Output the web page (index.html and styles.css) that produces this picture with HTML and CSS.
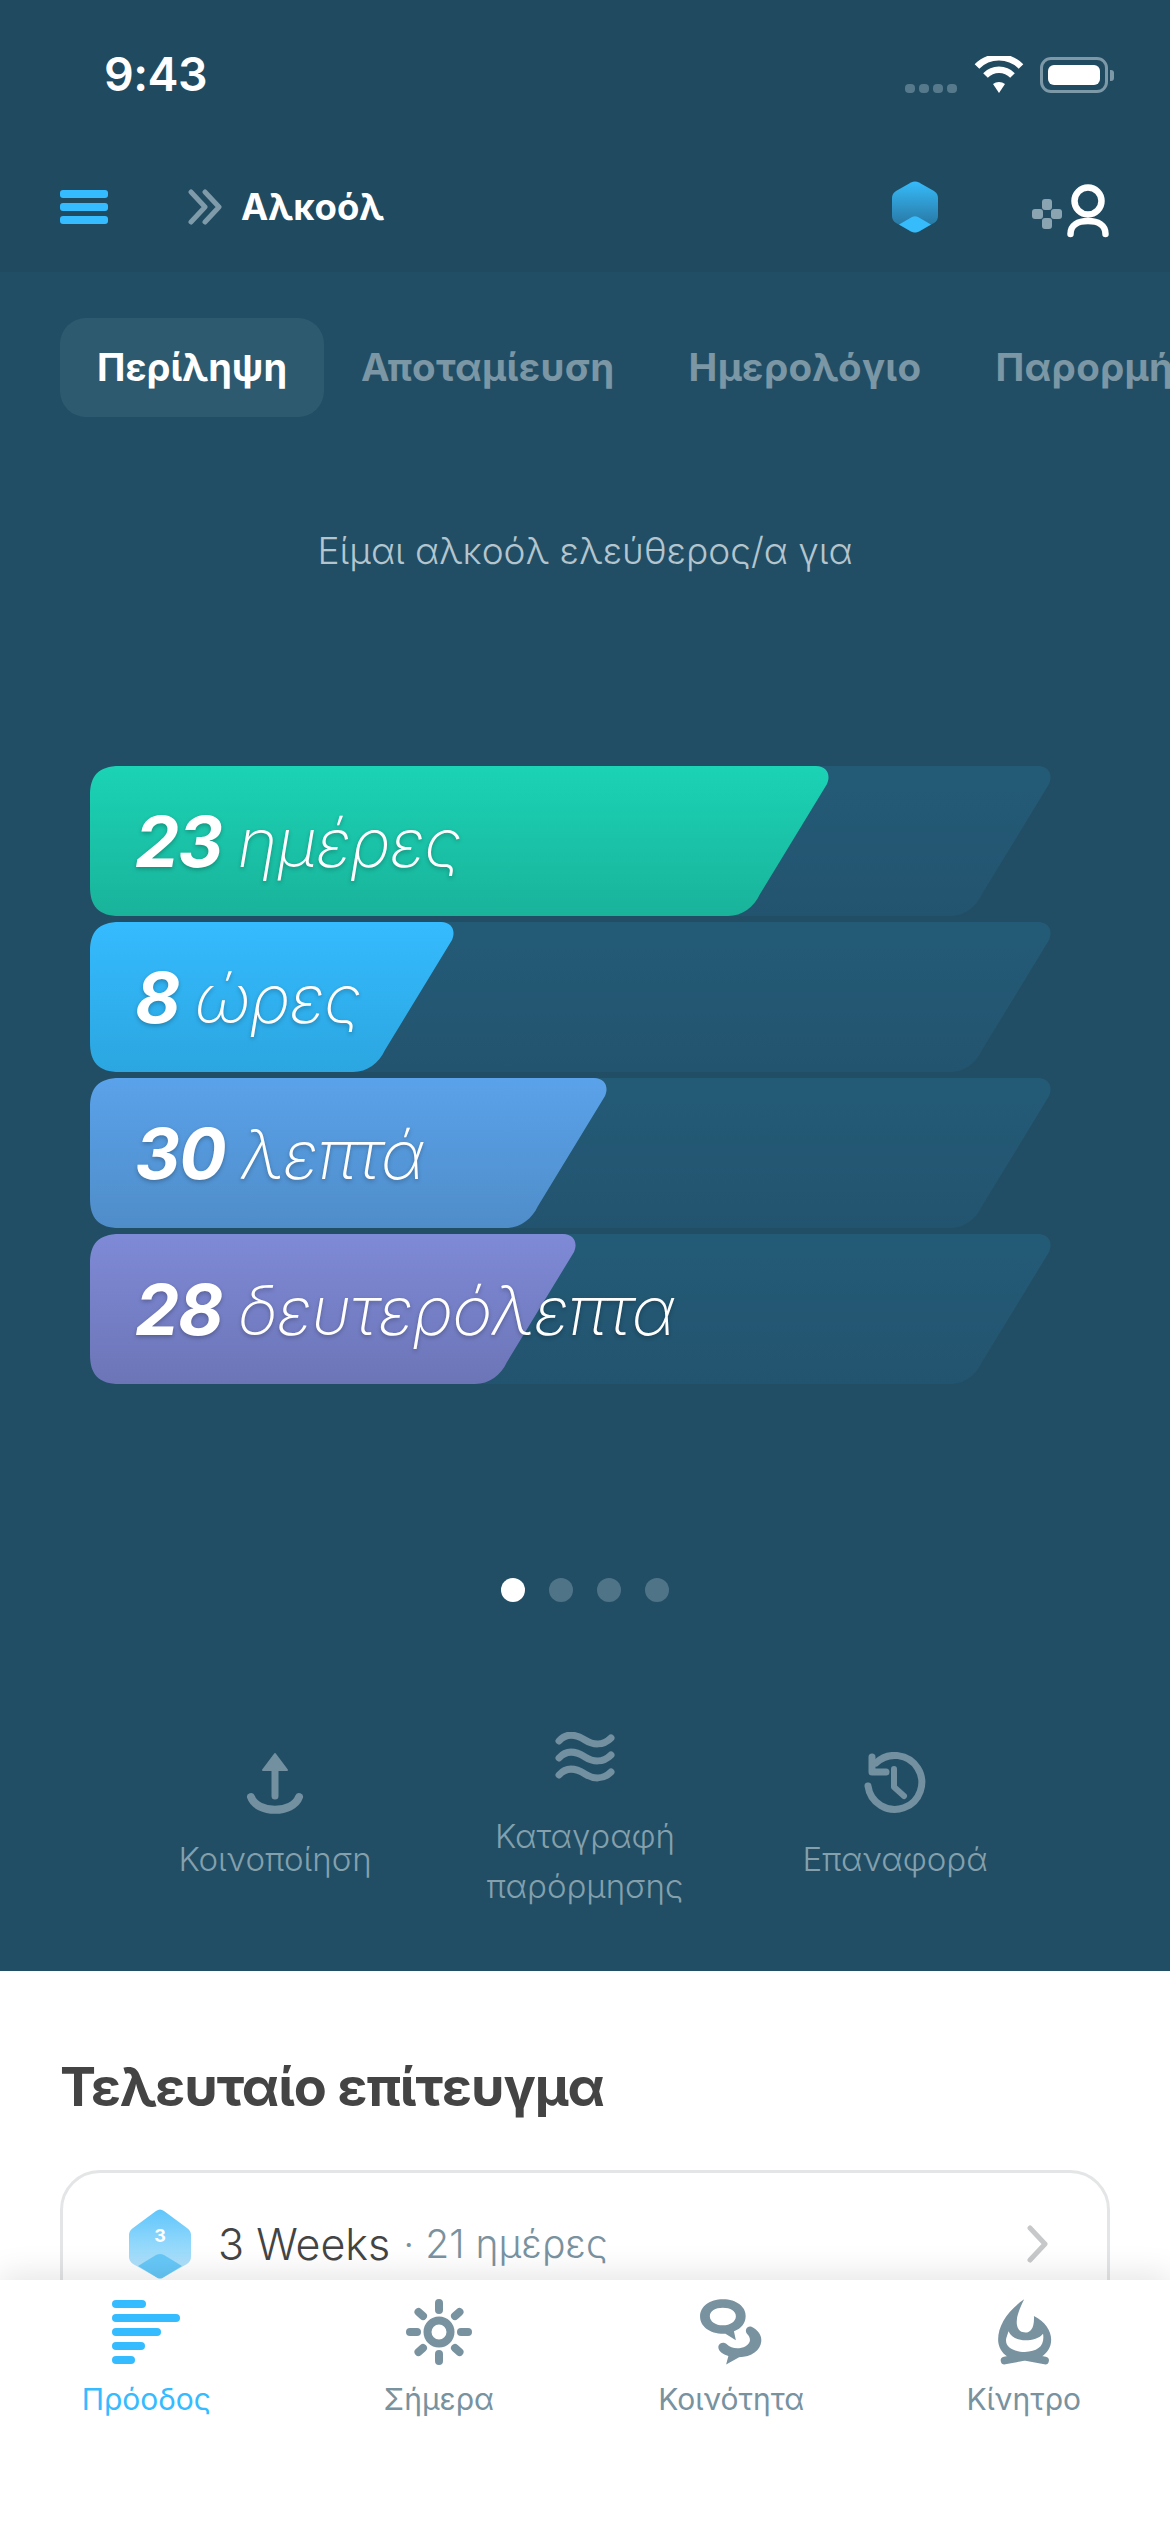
FILE: index.html
```html
<!DOCTYPE html>
<html lang="el">
<head>
    <meta charset="UTF-8">
    <meta name="viewport" content="width=device-width, initial-scale=1.0">
    <title>Αλκοόλ</title>
    <link rel="stylesheet" href="styles.css">
</head>
<body>
    <div class="app">
        <header class="top">
            <div class="status">
                <span class="time">9:43</span>
                <div class="status-icons">
                    <span class="signal"><i></i><i></i><i></i><i></i></span>
                    <svg class="wifi" width="50" height="37" viewBox="0 0 50 37">
                        <path d="M25 37 L19 28 A10 10 0 0 1 31 28 Z" fill="#fff"/>
                        <path d="M11.5 19.5 A19 19 0 0 1 38.5 19.5" fill="none" stroke="#fff" stroke-width="6.5"/>
                        <path d="M3 10.5 A31 31 0 0 1 47 10.5" fill="none" stroke="#fff" stroke-width="6.5"/>
                    </svg>
                    <span class="battery"><b></b></span>
                </div>
            </div>
            <nav class="navbar">
                <div class="burger"><i></i><i></i><i></i></div>
                <svg class="chevrons" width="34" height="36" viewBox="0 0 34 36">
                    <path d="M3 3 L17 18 L3 33 M17 3 L31 18 L17 33" fill="none" stroke="#7f9aa8" stroke-width="5" stroke-linecap="round" stroke-linejoin="round"/>
                </svg>
                <span class="nav-title">Αλκοόλ</span>
                <svg class="hex" width="46" height="52" viewBox="0 0 46 52">
                    <defs>
                        <linearGradient id="hexfill" x1="0" y1="0" x2="0" y2="1">
                            <stop offset="0" stop-color="#36bbfb"/>
                            <stop offset="1" stop-color="#266d94"/>
                        </linearGradient>
                    </defs>
                    <path d="M19 1.500 Q23 -0.500 27 1.500 L42 10 Q46 12.500 46 17 V35 Q46 39.500 42 42 L27 50.500 Q23 52.500 19 50.500 L4 42 Q0 39.500 0 35 V17 Q0 12.500 4 10 Z" fill="url(#hexfill)"/>
                    <path d="M7 43.500 L20 36 Q23 34.500 26 36 L39 43.500 L27 50.500 Q23 52.500 19 50.500 Z" fill="#36bbfb"/>
                </svg>
                <svg class="person" width="96" height="54" viewBox="0 0 96 54">
                    <g fill="#8aa4b1">
                        <rect x="23" y="15" width="10" height="11" rx="3"/>
                        <rect x="23" y="34" width="10" height="11" rx="3"/>
                        <rect x="13" y="25" width="11" height="10" rx="3"/>
                        <rect x="32" y="25" width="11" height="10" rx="3"/>
                    </g>
                    <circle cx="69" cy="17" r="13.500" fill="none" stroke="#fff" stroke-width="6.500"/>
                    <path d="M51.500 50 C51.500 41 59 37 69 37 C79 37 86.500 41 86.500 50" fill="none" stroke="#fff" stroke-width="6.500" stroke-linecap="round"/>
                </svg>
            </nav>
        </header>

        <section class="hero">
            <div class="tabs">
                <span class="tab active">Περίληψη</span>
                <span class="tab">Αποταμίευση</span>
                <span class="tab">Ημερολόγιο</span>
                <span class="tab">Παρορμήσεις</span>
            </div>

            <p class="lead">Είμαι αλκοόλ ελεύθερος/α για</p>

            <svg class="defs" width="0" height="0">
                <defs>
                    <linearGradient id="track" x1="0" y1="0" x2="0" y2="1"><stop offset="0" stop-color="#235b77"/><stop offset="1" stop-color="#23546f"/></linearGradient>
                    <linearGradient id="green" x1="0" y1="0" x2="0" y2="1"><stop offset="0" stop-color="#1bd3b5"/><stop offset="1" stop-color="#19b39a"/></linearGradient>
                    <linearGradient id="blue" x1="0" y1="0" x2="0" y2="1"><stop offset="0" stop-color="#35bbff"/><stop offset="1" stop-color="#2ba6e0"/></linearGradient>
                    <linearGradient id="sky" x1="0" y1="0" x2="0" y2="1"><stop offset="0" stop-color="#5aa2ea"/><stop offset="1" stop-color="#4f8dc9"/></linearGradient>
                    <linearGradient id="violet" x1="0" y1="0" x2="0" y2="1"><stop offset="0" stop-color="#7f8ad7"/><stop offset="1" stop-color="#6c75b6"/></linearGradient>
                </defs>
            </svg>

            <div class="bars">
                <div class="bar">
                    <svg viewBox="0 0 964 150" width="964" height="150">
                        <path fill="url(#track)" d="M30 0 H948 C959 0 963 9 959 18 L892 128 C886 141 874 150 860 150 H30 C8 150 0 140 0 120 V30 C0 10 8 0 30 0 Z"/>
                        <path fill="url(#green)" d="M30 0 H726 C737 0 741 9 737 18 L670 128 C664 141 652 150 638 150 H30 C8 150 0 140 0 120 V30 C0 10 8 0 30 0 Z"/>
                    </svg>
                    <span class="bar-text"><b>23</b> ημέρες</span>
                </div>
                <div class="bar">
                    <svg viewBox="0 0 964 150" width="964" height="150">
                        <path fill="url(#track)" d="M30 0 H948 C959 0 963 9 959 18 L892 128 C886 141 874 150 860 150 H30 C8 150 0 140 0 120 V30 C0 10 8 0 30 0 Z"/>
                        <path fill="url(#blue)" d="M30 0 H351 C362 0 366 9 362 18 L295 128 C289 141 277 150 263 150 H30 C8 150 0 140 0 120 V30 C0 10 8 0 30 0 Z"/>
                    </svg>
                    <span class="bar-text"><b>8</b> ώρες</span>
                </div>
                <div class="bar">
                    <svg viewBox="0 0 964 150" width="964" height="150">
                        <path fill="url(#track)" d="M30 0 H948 C959 0 963 9 959 18 L892 128 C886 141 874 150 860 150 H30 C8 150 0 140 0 120 V30 C0 10 8 0 30 0 Z"/>
                        <path fill="url(#sky)" d="M30 0 H504 C515 0 519 9 515 18 L448 128 C442 141 430 150 416 150 H30 C8 150 0 140 0 120 V30 C0 10 8 0 30 0 Z"/>
                    </svg>
                    <span class="bar-text"><b>30</b> λεπτά</span>
                </div>
                <div class="bar">
                    <svg viewBox="0 0 964 150" width="964" height="150">
                        <path fill="url(#track)" d="M30 0 H948 C959 0 963 9 959 18 L892 128 C886 141 874 150 860 150 H30 C8 150 0 140 0 120 V30 C0 10 8 0 30 0 Z"/>
                        <path fill="url(#violet)" d="M30 0 H473 C484 0 488 9 484 18 L417 128 C411 141 399 150 385 150 H30 C8 150 0 140 0 120 V30 C0 10 8 0 30 0 Z"/>
                    </svg>
                    <span class="bar-text"><b>28</b> δευτερόλεπτα</span>
                </div>
            </div>

            <div class="dots"><i class="on"></i><i></i><i></i><i></i></div>

            <div class="actions">
                <div class="action short">
                    <svg width="60" height="62" viewBox="0 0 60 62">
                        <path d="M30 2 L42 18 H18 Z" fill="#7290a0" stroke="#7290a0" stroke-width="2" stroke-linejoin="round"/>
                        <path d="M30 14 V44" stroke="#7290a0" stroke-width="7" stroke-linecap="round"/>
                        <path d="M6 45 C12 62 48 62 54 45" fill="none" stroke="#7290a0" stroke-width="8" stroke-linecap="round"/>
                    </svg>
                    <span>Κοινοποίηση</span>
                </div>
                <div class="action">
                    <svg width="60" height="59" viewBox="0 0 60 59">
                        <path d="M4 9 C12 0 22 3 30 8 S48 14 56 6 M4 26 C12 17 22 20 30 25 S48 31 56 23 M4 43 C12 34 22 37 30 42 S48 48 56 40" fill="none" stroke="#7290a0" stroke-width="7" stroke-linecap="round"/>
                    </svg>
                    <span>Καταγραφή<br>παρόρμησης</span>
                </div>
                <div class="action short">
                    <svg width="62" height="62" viewBox="0 0 62 62">
                        <path d="M4 34 A27 27 0 1 0 12 11" fill="none" stroke="#7290a0" stroke-width="7" stroke-linecap="round"/>
                        <path d="M8 5 V20 H22" fill="none" stroke="#7290a0" stroke-width="7" stroke-linecap="round" stroke-linejoin="round"/>
                        <path d="M30 17 V35 L40 44" fill="none" stroke="#7290a0" stroke-width="6" stroke-linecap="round" stroke-linejoin="round"/>
                    </svg>
                    <span>Επαναφορά</span>
                </div>
            </div>
        </section>

        <section class="lower">
            <h2>Τελευταίο επίτευγμα</h2>
            <div class="card">
                <span class="badge">
                    <svg width="62" height="70" viewBox="0 0 62 70">
                        <defs>
                            <linearGradient id="badgefill" x1="0" y1="0" x2="0" y2="1">
                                <stop offset="0" stop-color="#5fc6fb"/>
                                <stop offset="1" stop-color="#c3e8fb"/>
                            </linearGradient>
                        </defs>
                        <path d="M27 2 Q31 -1 35 2 L58 19 Q62 22 62 26 V48 Q62 52 58 55 L35 68 Q31 71 27 68 L4 55 Q0 52 0 48 V26 Q0 22 4 19 Z" fill="url(#badgefill)"/>
                        <path d="M9 57 L27 46 Q31 44 35 46 L53 57 L35 68 Q31 71 27 68 Z" fill="#66c8f8"/>
                    </svg>
                    <span class="badge-num">3</span>
                </span>
                <span class="card-title">3 Weeks</span>
                <span class="card-sub">· 21 ημέρες</span>
                <svg class="chevron" width="22" height="38" viewBox="0 0 22 38">
                    <path d="M3 3 L18 19 L3 35" fill="none" stroke="#c6c8ca" stroke-width="5" stroke-linecap="round" stroke-linejoin="round"/>
                </svg>
            </div>
        </section>

        <footer class="tabbar">
            <div class="tabitem current">
                <svg width="68" height="66" viewBox="0 0 68 66">
                    <g fill="#35bbff">
                        <rect x="0" y="1" width="34" height="8" rx="4"/>
                        <rect x="0" y="15" width="68" height="8" rx="4"/>
                        <rect x="0" y="29" width="49" height="8" rx="4"/>
                        <rect x="0" y="43" width="33" height="8" rx="4"/>
                        <rect x="0" y="57" width="23" height="8" rx="4"/>
                    </g>
                </svg>
                <span>Πρόοδος</span>
            </div>
            <div class="tabitem">
                <svg width="68" height="66" viewBox="0 0 68 66">
                    <circle cx="34" cy="33" r="11.500" fill="none" stroke="#7892a0" stroke-width="8"/>
                    <path d="M34 4 V11 M34 55 V62 M5 33 H12 M56 33 H63 M13.500 13 L18 17 M54.500 13 L50 17 M13.500 53 L18 49 M54.500 53 L50 49" stroke="#7892a0" stroke-width="8" stroke-linecap="round"/>
                </svg>
                <span>Σήμερα</span>
            </div>
            <div class="tabitem">
                <svg width="70" height="72" viewBox="230 45 210 215">
                    <path fill="#7892a0" fill-rule="evenodd" d="M310 52 C352 52 382 76 380 105 C379 125 368 142 344 150 L350 178 L318 158 C270 160 240 135 240 105 C240 74 270 52 310 52 Z M310 78 C287 78 270 88 270 104 C270 120 287 132 310 132 C333 132 350 120 350 104 C350 88 333 78 310 78 Z"/>
                    <path fill="#7892a0" d="M398 136 C418 146 430 162 428 182 C426 208 398 230 360 230 L320 252 L327 226 C310 222 296 212 296 198 C298 184 314 182 322 190 C336 204 360 206 380 196 C398 186 396 170 384 158 C376 146 384 132 398 136 Z"/>
                </svg>
                <span>Κοινότητα</span>
            </div>
            <div class="tabitem">
                <svg width="58" height="72" viewBox="1120 45 175 215">
                    <path fill="#7892a0" fill-rule="evenodd" d="M1208 52 C1192 85 1182 110 1186 132 C1190 150 1200 154 1212 154 C1228 154 1240 140 1238 103 C1272 120 1291 148 1291 176 C1291 200 1278 216 1262 228 L1210 228 L1156 228 C1140 216 1128 198 1128 176 C1128 130 1160 85 1208 52 Z M1153 172 C1148 196 1170 212 1210 214 C1250 212 1272 196 1266 158 C1256 172 1232 178 1212 178 C1190 178 1168 170 1160 150 Z"/>
                    <path d="M1148 240 L1210 228 L1272 240" fill="none" stroke="#7892a0" stroke-width="24" stroke-linecap="round" stroke-linejoin="round"/>
                </svg>
                <span>Κίνητρο</span>
            </div>
        </footer>
    </div>
</body>
</html>
```

FILE: styles.css
```css
* { box-sizing: border-box; }
html, body { margin: 0; padding: 0; }
body { font-family: Inter, "Noto Sans", sans-serif; background: #fff; }
.app { position: relative; width: 1170px; height: 2532px; overflow: hidden; background: #fff; }

.top { height: 272px; background: #1f4a60; }
.status { display: flex; justify-content: space-between; align-items: center; height: 148px; padding: 0 62px 0 104px; }
.time { color: #fff; font-size: 46.5px; font-weight: 600; letter-spacing: -0.5px; }
.status-icons { display: flex; align-items: flex-end; height: 37px; }
.signal { display: flex; gap: 4px; margin-right: 17px; }
.signal i { width: 10px; height: 9px; border-radius: 4px; background: #567a8c; }
.wifi { margin-right: 16px; }
.battery { position: relative; width: 68px; height: 36px; padding: 5px; border: 3px solid #7d98a6; border-radius: 11px; }
.battery b { display: block; height: 100%; background: #fff; border-radius: 6px; }
.battery::after { content: ""; position: absolute; right: -9px; top: 10px; width: 4px; height: 11px; background: #7d98a6; border-radius: 0 3px 3px 0; }

.navbar { display: flex; align-items: center; height: 124px; padding: 0 0 6px 60px; }
.burger { display: flex; flex-direction: column; gap: 5px; width: 48px; margin-right: 80px; }
.burger i { height: 8px; border-radius: 3px; background: #35bbff; }
.chevrons { margin-right: 19px; }
.nav-title { color: #fff; font-size: 36.5px; font-weight: 700; }
.hex { margin-left: auto; margin-right: 81px; }
.person { margin-right: 55px; margin-top: 8px; }

.hero { height: 1699px; background: #214e65; padding-top: 46px; }
.tabs { display: flex; align-items: center; height: 99px; padding-left: 60px; white-space: nowrap; overflow: hidden; }
.tab { padding: 0 37px; color: #7b96a4; font-size: 38.5px; font-weight: 700; letter-spacing: 0.3px; height: 99px; line-height: 99px; flex: none; }
.tab.active { color: #fff; background: #2d5a6f; border-radius: 26px; font-size: 38px; letter-spacing: 0; }
.lead { margin: 106px 0 0; text-align: center; color: #b4c5ce; font-size: 37px; font-weight: 300; line-height: 56px; }

.defs { position: absolute; }
.bars { margin-top: 187px; padding-left: 90px; }
.bar { position: relative; height: 150px; margin-bottom: 6px; display: flex; align-items: center; padding-left: 45px; }
.bar svg { position: absolute; left: 0; top: 0; }
.bar-text { position: relative; color: #fff; font-size: 68.5px; font-weight: 250; font-style: italic; letter-spacing: -1px; text-shadow: 0 2px 4px rgba(0,0,0,0.25); }
.bar-text b { font-size: 70px; font-weight: 700; margin-right: -3px; }

.dots { display: flex; justify-content: center; gap: 24px; margin-top: 194px; height: 24px; }
.dots i { width: 24px; height: 24px; border-radius: 50%; background: #4f7488; }
.dots i.on { background: #fff; }

.actions { display: grid; grid-template-columns: repeat(3, 310px); justify-content: center; align-items: start; margin-top: 130px; }
.action { display: flex; flex-direction: column; align-items: center; text-align: center; color: #84a0ad; font-size: 33px; font-weight: 300; line-height: 50px; }
.action.short { margin-top: 20px; }
.action svg { margin-bottom: 20px; }

.lower { padding: 0 60px; }
.lower h2 { margin: 84px 0 0; color: #444; font-size: 54px; font-weight: 700; line-height: 64px; letter-spacing: -1.1px; }
.card { display: flex; height: 200px; margin-top: 51px; padding: 36px 58px 0 66px; border: 3px solid #e3e5e6; border-radius: 40px; align-items: flex-start; }
.badge { position: relative; width: 62px; height: 70px; margin-right: 27px; }
.badge-num { position: absolute; left: 0; right: 0; top: 16px; text-align: center; color: #fff; font-size: 18px; font-weight: 700; }
.card-title { color: #444; font-size: 43px; font-weight: 300; line-height: 70px; }
.card-sub { margin-left: 13px; color: #7a92a0; font-size: 39px; font-weight: 300; line-height: 70px; }
.chevron { margin-left: auto; margin-top: 16px; }

.tabbar { position: absolute; left: 0; right: 0; bottom: 0; height: 252px; display: grid; grid-template-columns: repeat(4, 1fr); align-items: start; padding-top: 17px; background: #fff; box-shadow: 0 -6px 30px rgba(0,0,0,0.1); }
.tabitem { display: flex; flex-direction: column; align-items: center; height: 72px; color: #7892a0; font-size: 30px; }
.tabitem svg { height: 70px; flex: none; }
.tabitem span { margin-top: 12px; line-height: 40px; }
.tabitem.current { color: #35bbff; }
```
